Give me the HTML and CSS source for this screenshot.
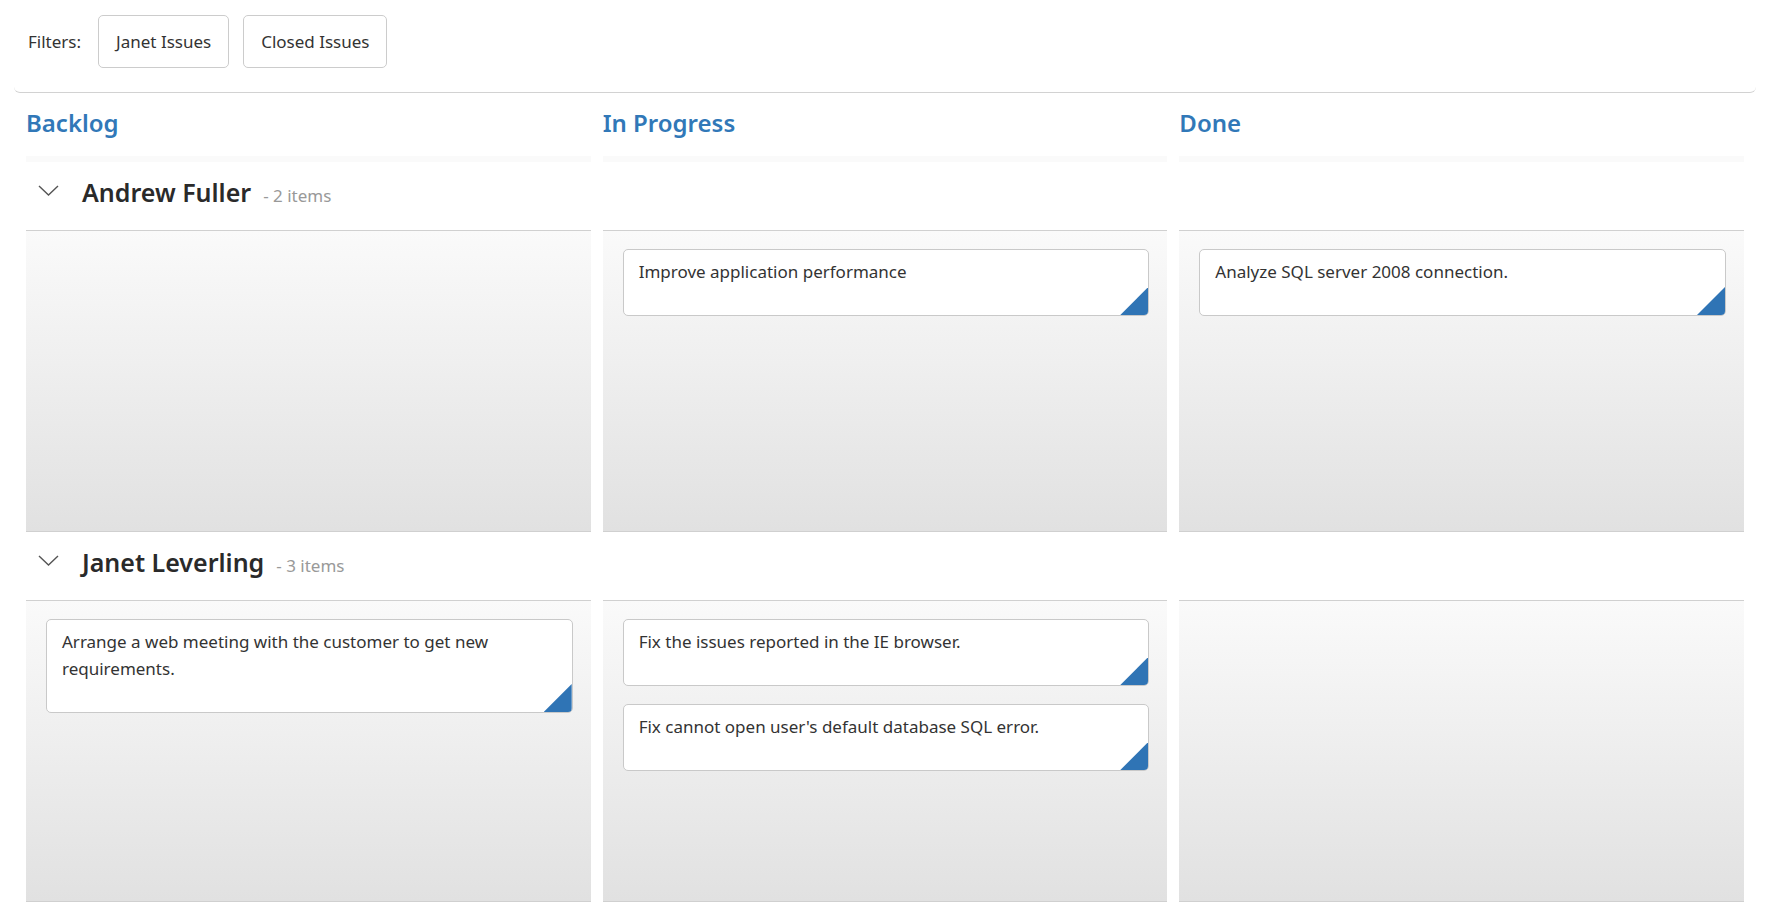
FILE: index.html
```html
<!DOCTYPE html>
<html lang="en">
<head>
<meta charset="utf-8">
<title>Kanban</title>
<link rel="stylesheet" href="styles.css">
</head>
<body>
<div class="page">
  <div class="toolbar">
    <span class="toolbar-label">Filters:</span>
    <button class="filter-btn">Janet Issues</button>
    <button class="filter-btn">Closed Issues</button>
  </div>

  <div class="board">
    <div class="col-head">Backlog</div>
    <div class="col-head">In Progress</div>
    <div class="col-head">Done</div>

    <div class="lane-head">
      <svg class="chevron" width="21" height="11" viewBox="0 0 21 11"><polyline points="1,1 10.5,10 20,1" fill="none" stroke="#555" stroke-width="1.4"/></svg>
      <span class="lane-name">Andrew Fuller</span>
      <span class="lane-count">- 2 items</span>
    </div>
    <div class="cell"></div>
    <div class="cell">
      <div class="card">Improve application performance</div>
    </div>
    <div class="cell">
      <div class="card">Analyze SQL server 2008 connection.</div>
    </div>

    <div class="lane-head">
      <svg class="chevron" width="21" height="11" viewBox="0 0 21 11"><polyline points="1,1 10.5,10 20,1" fill="none" stroke="#555" stroke-width="1.4"/></svg>
      <span class="lane-name">Janet Leverling</span>
      <span class="lane-count">- 3 items</span>
    </div>
    <div class="cell">
      <div class="card">Arrange a web meeting with the customer to get new requirements.</div>
    </div>
    <div class="cell">
      <div class="card">Fix the issues reported in the IE browser.</div>
      <div class="card">Fix cannot open user's default database SQL error.</div>
    </div>
    <div class="cell"></div>
  </div>
</div>
</body>
</html>
```

FILE: styles.css
```css
* { box-sizing: border-box; }

html, body {
  margin: 0;
  padding: 0;
  background: #fff;
}

body {
  font-family: "Noto Sans", "Open Sans", sans-serif;
  color: #333;
}

.page {
  padding: 0 19px 0 14px;
}

.toolbar {
  display: flex;
  align-items: center;
  height: 93px;
  padding: 0 14px 9px;
  border-bottom: 1px solid #d2d2d2;
  border-radius: 0 0 6px 6px;
}

.toolbar-label {
  font-size: 17px;
  color: #333;
  margin-right: 17px;
}

.filter-btn {
  font-family: "Noto Sans", "Open Sans", sans-serif;
  font-size: 17px;
  color: #333;
  background: #fff;
  border: 1px solid #ccc;
  border-radius: 5px;
  height: 53px;
  padding: 0 17px;
  margin-right: 14px;
  cursor: pointer;
}

.board {
  margin: 0 12px;
  display: grid;
  grid-template-columns: 1fr 1fr 1fr;
  column-gap: 12px;
}

.col-head {
  font-size: 24px;
  font-weight: 600;
  color: #3178b8;
  line-height: 34px;
  padding: 13px 0 16px;
  border-bottom: 6px solid #fafafa;
}

.lane-head {
  grid-column: 1 / -1;
  display: flex;
  align-items: baseline;
  padding: 13px 0 21px 12px;
}

.chevron {
  align-self: center;
  margin-right: 23px;
  margin-top: -4px;
}

.lane-name {
  font-size: 25px;
  font-weight: 600;
  color: #2a2a2a;
  line-height: 34px;
}

.lane-count {
  font-size: 17px;
  color: #999;
  margin-left: 12px;
}

.cell {
  height: 302px;
  border-top: 1px solid #d0d0d0;
  border-bottom: 1px solid #d0d0d0;
  background: linear-gradient(to bottom, #fafafa 0%, #e1e1e1 100%);
  padding: 18px 18px 0 20px;
}

.card {
  position: relative;
  overflow: hidden;
  background: #fff;
  border: 1px solid #c9c9c9;
  border-radius: 5px;
  font-size: 17px;
  line-height: 27px;
  color: #333;
  padding: 8px 15px 30px;
  margin-bottom: 18px;
}

.card::after {
  content: "";
  position: absolute;
  right: 0;
  bottom: 0;
  width: 28px;
  height: 28px;
  background: #2f74b5;
  clip-path: polygon(100% 0, 100% 100%, 0 100%);
}
```
